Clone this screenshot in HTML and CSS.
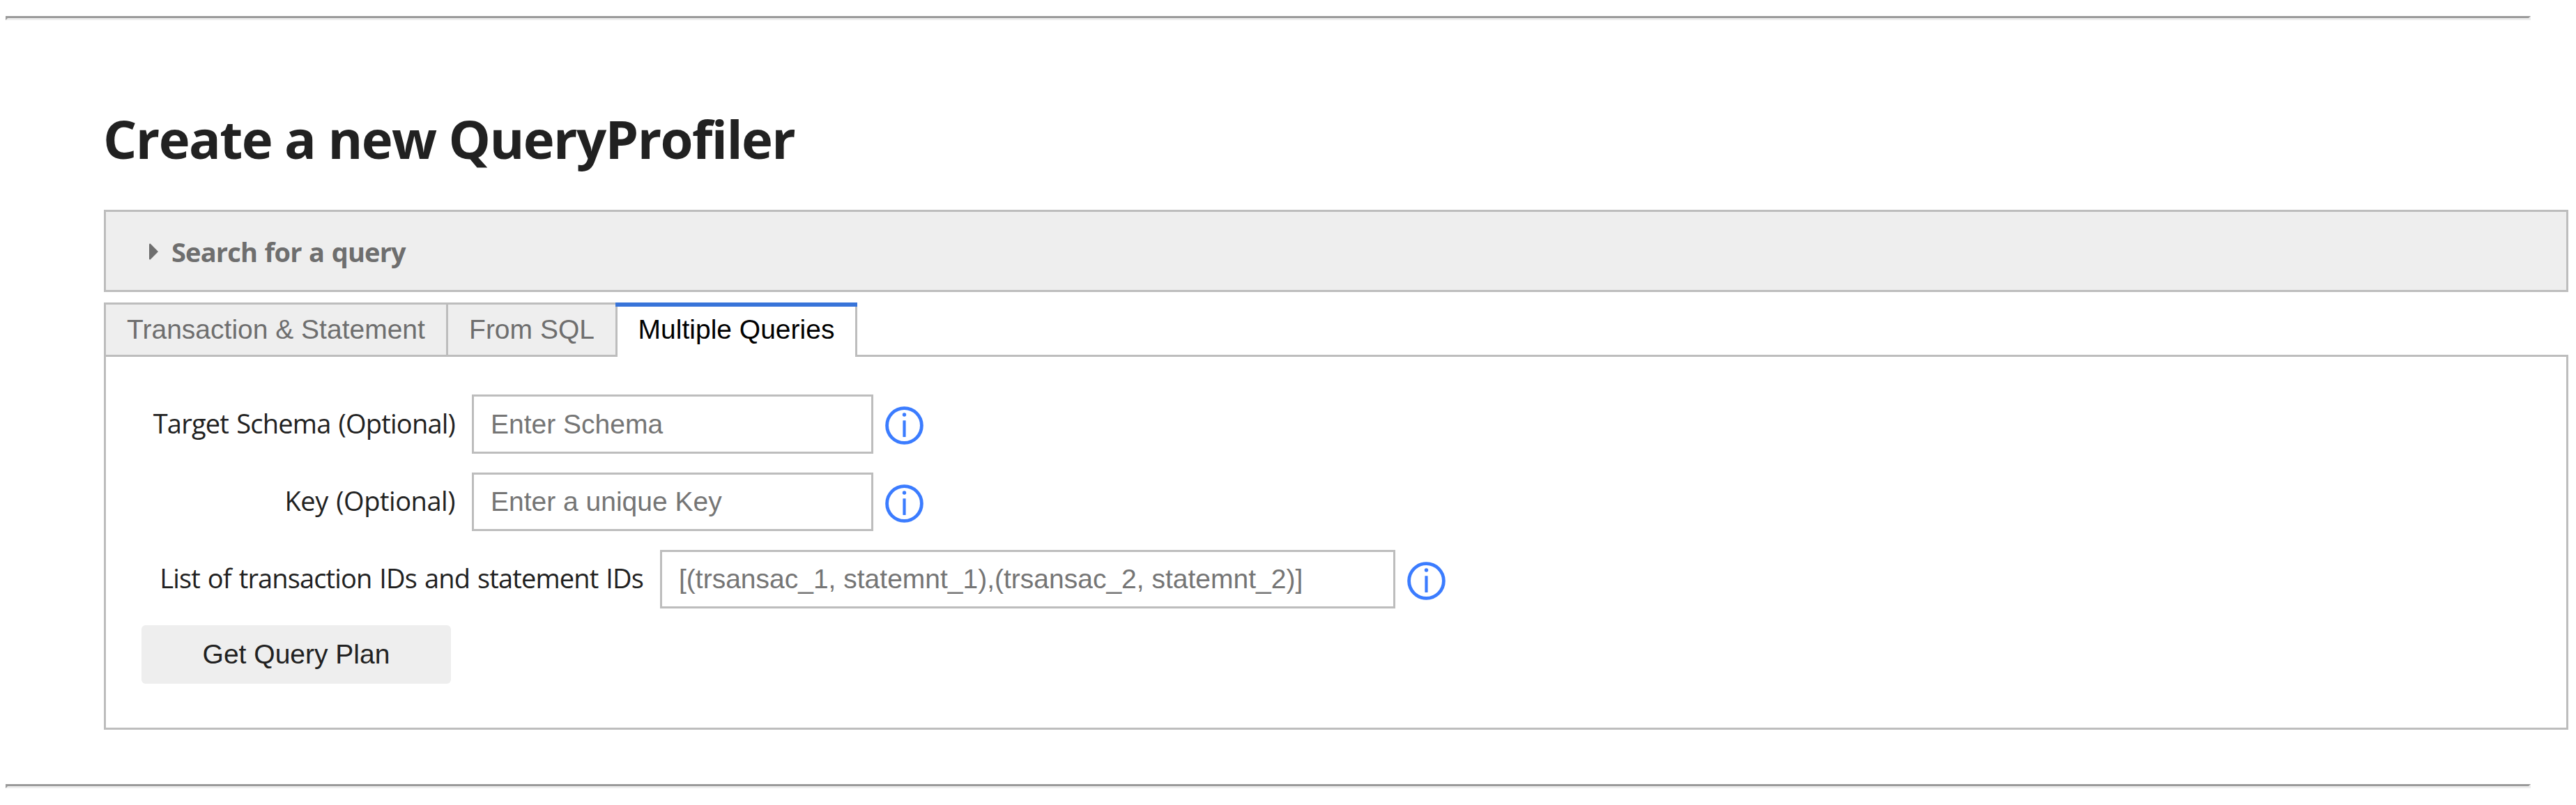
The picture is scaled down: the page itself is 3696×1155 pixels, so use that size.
FILE: index.html
```html
<!DOCTYPE html>
<html lang="en">
<head>
<meta charset="utf-8">
<title>QueryProfiler</title>
<link rel="stylesheet" href="styles.css">
</head>
<body>
<svg class="sprite" aria-hidden="true">
  <symbol id="info" viewBox="0 0 55 55">
    <circle cx="27.5" cy="27.5" r="24.9" fill="none" stroke="#3b7cff" stroke-width="4.8"/>
    <circle cx="27.5" cy="12" r="2.7" fill="#3b7cff"/>
    <rect x="25.4" y="20.3" width="4.2" height="23.7" rx=".4" fill="#3b7cff"/>
  </symbol>
</svg>
<hr class="rule">
<main class="profiler">
  <h1 class="title">Create a new QueryProfiler</h1>
  <section class="accordion">
    <svg class="caret" viewBox="0 0 13 24"><path d="M0 1.2Q.8-.2 1.9.8L13 12 1.9 23.2Q.8 24.2 0 22.8Z" fill="#6e6e6e"/></svg>
    <span class="accordion-label">Search for a query</span>
  </section>
  <nav class="tabs">
    <button class="tab tab-first">Transaction &amp; Statement</button>
    <button class="tab tab-sql">From SQL</button>
    <button class="tab tab-active">Multiple Queries</button>
  </nav>
  <section class="panel">
    <div class="row row-schema">
      <label class="label label-schema" for="schema">Target Schema (Optional)</label>
      <input class="field" id="schema" placeholder="Enter Schema">
      <svg class="info"><use href="#info"/></svg>
    </div>
    <div class="row row-key">
      <label class="label label-key" for="key">Key (Optional)</label>
      <input class="field" id="key" placeholder="Enter a unique Key">
      <svg class="info"><use href="#info"/></svg>
    </div>
    <div class="row row-list">
      <label class="label label-list" for="list">List of transaction IDs and statement IDs</label>
      <input class="field field-wide" id="list" placeholder="[(trsansac_1, statemnt_1),(trsansac_2, statemnt_2)]">
      <svg class="info"><use href="#info"/></svg>
    </div>
    <button class="submit">Get Query Plan</button>
  </section>
</main>
<hr class="rule">
</body>
</html>
```
FILE: styles.css
```css
* { box-sizing: border-box; }
body {
  margin: 0;
  padding-top: 23px;
  background: #fff;
  color: #212121;
  font-family: "Open Sans", "Noto Sans", sans-serif;
  font-size: 38px;
}
.sprite { display: none; }
.rule {
  width: 3623px;
  height: 6px;
  margin: 0 0 0 8px;
  border: 3px solid;
  border-color: #9a9a9a #eee #eee #9a9a9a;
}
.profiler {
  width: 3536px;
  margin-left: 149px;
  padding: 117px 0 78px;
}
.title {
  height: 106px;
  margin: 0 0 49px;
  font-size: 76px;
  font-weight: 700;
  line-height: 106px;
  letter-spacing: -1.62px;
  text-indent: -1px;
}
.accordion {
  display: flex;
  align-items: center;
  height: 118px;
  margin-bottom: 15px;
  padding: 2px 0 0 62px;
  border: 3px solid #bdbdbd;
  background: #eee;
  color: #6e6e6e;
}
.caret { width: 13px; height: 24px; margin-right: 19px; }
.accordion-label { font-weight: 700; letter-spacing: -.84px; word-spacing: 1.5px; }
.tabs {
  display: flex;
  position: relative;
  height: 78px;
}
.tab {
  flex: none;
  height: 78px;
  margin: 0;
  padding: 0;
  border: 3px solid #bdbdbd;
  border-radius: 0;
  background: #eee;
  color: #6e6e6e;
  font: 39px "Liberation Sans", Arial, sans-serif;
}
.tab-first { width: 494px; }
.tab-sql { width: 243px; border-left: 0; }
.tab-active {
  width: 347px;
  margin-left: -3px;
  border-top: 0;
  border-bottom: 0;
  background: linear-gradient(#3874d9 6px, #fff 6px) border-box;
  border-image: linear-gradient(#3874d9 6px, #bdbdbd 6px) 0 3;
  color: #000;
}
.panel {
  height: 538px;
  margin-top: -3px;
  padding: 54px 0 0 51px;
  border: 3px solid #bdbdbd;
}
.row { display: flex; }
.row-schema { height: 85px; margin-bottom: 27px; }
.row-key { height: 84px; margin-bottom: 27px; }
.row-list { height: 84px; margin-bottom: 24px; }
.label {
  display: flex;
  flex: none;
  align-items: center;
  justify-content: flex-end;
  width: 450px;
  margin-right: 24px;
  padding-bottom: 4px;
  white-space: nowrap;
  word-spacing: 2px;
}
.label-schema { letter-spacing: -.78px; }
.label-key { letter-spacing: -.45px; }
.label-list { width: 720px; letter-spacing: -.87px; }
.field {
  flex: none;
  width: 576px;
  height: 100%;
  margin: 0;
  padding: 0 23px 0 24px;
  border: 3px solid #bdbdbd;
  border-radius: 0;
  background: #fff;
  font: 39px "Liberation Sans", Arial, sans-serif;
}
.field::placeholder { color: #757575; opacity: 1; }
.field-wide { width: 1055px; }
.info { flex: none; width: 55px; height: 55px; margin: 17px 0 0 17px; }
.submit {
  display: block;
  width: 444px;
  height: 84px;
  padding: 0;
  border: 0;
  border-radius: 6px;
  background: #eee;
  color: #212121;
  font: 39px "Liberation Sans", Arial, sans-serif;
}
```
